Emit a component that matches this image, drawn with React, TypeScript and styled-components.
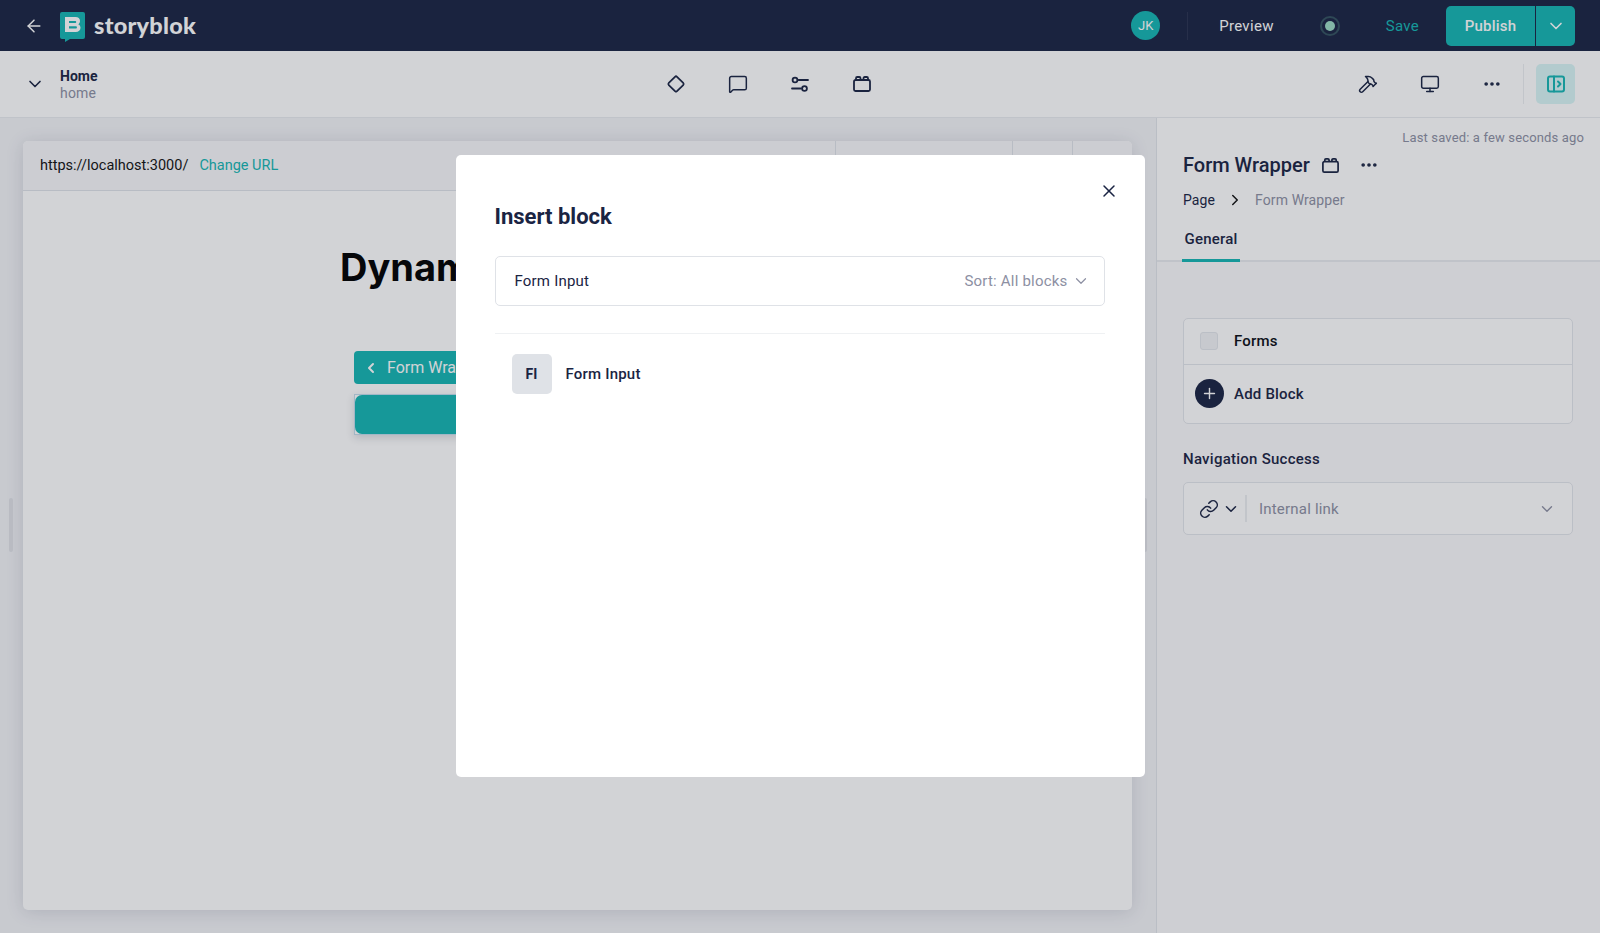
import React from "react";
import styled, { createGlobalStyle } from "styled-components";
import {
  ArrowLeft, ChevronDown, ChevronLeft, ChevronRight, Ellipsis, Hammer, Link, MessageSquare, Monitor, Plus, X,
} from "lucide-react";

const navy = "#1a2443";
const teal = "#14b6b3";
const grey = "#8d90a3";

const Global = createGlobalStyle`
  html, body { margin: 0; padding: 0; height: 100%; overflow: hidden; background: #fff; }
  body { font-family: Roboto, "Liberation Sans", sans-serif; color: ${navy}; }
  * { box-sizing: border-box; }
`;

const Page = styled.div`
  width: 1600px; height: 933px; display: flex; flex-direction: column; overflow: hidden;
`;

const TopBar = styled.header`
  height: 51px; flex: none; background: ${navy}; display: flex; align-items: center; padding: 0 25px 0 24px;
`;
const BackButton = styled.span`
  display: flex; width: 20px; color: #fff; margin-right: 16px;
`;
const LogoMark = styled.svg`
  flex: none; display: block; margin-top: 3px;
`;
const LogoText = styled.span`
  font-family: Lato, sans-serif; font-weight: 900; font-size: 23.5px; line-height: 1; color: #fff; margin-left: 9px; letter-spacing: 0.25px;
`;
const Spacer = styled.div`flex: 1;`;
const Avatar = styled.span`
  width: 29px; height: 29px; border-radius: 50%; background: ${teal}; color: #fff; font-size: 13px;
  display: flex; align-items: center; justify-content: center; margin-right: 27px;
`;
const TopDivider = styled.span`
  width: 1px; height: 28px; background: #2a3350; margin-right: 31px;
`;
const PreviewLink = styled.span`
  color: #fff; font-size: 15px; font-weight: 400; letter-spacing: 0.3px; margin-right: 46px;
`;
const Status = styled.span`
  width: 20px; height: 20px; border-radius: 50%; border: 2px solid #33525f; display: flex; align-items: center; justify-content: center; margin-right: 46px;
  &::after { content: ""; width: 10px; height: 10px; border-radius: 50%; background: #9cdcc4; }
`;
const SaveLink = styled.span`
  color: ${teal}; font-size: 15px; letter-spacing: 0.3px; margin-right: 27px;
`;
const PublishGroup = styled.div`
  display: flex; height: 40px; border-radius: 5px; overflow: hidden; background: ${teal}; color: #fff;
`;
const PublishLabel = styled.span`
  width: 90px; display: flex; align-items: center; justify-content: center; font-size: 15px; font-weight: 500; letter-spacing: 0.2px; border-right: 1px solid ${navy};
`;
const PublishCaret = styled.span`
  width: 39px; display: flex; align-items: center; justify-content: center;
`;

const SubBar = styled.div`
  height: 67px; flex: none; background: #fff; display: grid; grid-template-columns: 1fr auto 1fr; align-items: center;
  border-bottom: 1px solid #e9ebef; padding: 0 25px 0 25px; position: relative; z-index: 2;
`;
const StoryInfo = styled.div`
  display: flex; align-items: center; gap: 15px;
`;
const StoryText = styled.div`
  display: flex; flex-direction: column; font-size: 14px; line-height: 17px; margin-top: 2px;
`;
const StoryName = styled.span`font-weight: 700;`;
const StorySlug = styled.span`color: ${grey}; font-size: 14px; letter-spacing: 0.2px;`;
const CenterTools = styled.div`
  display: flex; gap: 42px; align-items: center; margin-right: 63px;
`;
const ToolIcon = styled.span`
  width: 20px; height: 20px; display: flex; align-items: center; justify-content: center; color: ${navy};
`;
const RightTools = styled.div`
  display: flex; align-items: center; justify-content: flex-end;
`;
const RightIconGroup = styled.div`
  display: flex; gap: 42px; margin-right: 21px;
`;
const ToolDivider = styled.span`
  width: 1px; height: 40px; background: #eceef1; margin-right: 12px;
`;
const PanelToggle = styled.span`
  width: 39px; height: 40px; border-radius: 5px; background: #d9f5f6; color: ${teal}; display: flex; align-items: center; justify-content: center;
`;

const Body = styled.div`
  flex: 1; display: flex; min-height: 0;
`;
const PreviewArea = styled.main`
  width: 1156px; flex: none; background: #f3f4f7; padding: 23px 24px 23px 23px; position: relative; display: flex;
`;
const Handle = styled.span<{ $side: "left" | "right" }>`
  position: absolute; top: 380px; ${(p) => p.$side}: 9px; width: 4px; height: 54px; border-radius: 2px; background: #e0e2e7;
`;
const PreviewCard = styled.section`
  flex: 1; background: #fff; border-radius: 5px; box-shadow: 0 2px 18px rgba(27, 36, 65, 0.14); display: flex; flex-direction: column; overflow: hidden;
`;
const CardHeader = styled.div`
  height: 50px; flex: none; display: flex; background: #f8f8fa; border-bottom: 1px solid #dfe3e9; font-size: 14.5px;
`;
const UrlBox = styled.div`
  width: 812px; display: flex; align-items: center; padding: 0 0 0 17px; gap: 11px;
`;
const UrlText = styled.span`color: #111;`;
const ChangeUrl = styled.span`color: ${teal};`;
const HeaderCell = styled.div<{ $w: number }>`
  width: ${(p) => p.$w}px; border-left: 1px solid #dfe3e9;
`;
const CardBody = styled.div`
  flex: 1; padding: 49px 0 0 317px;
`;
const Heading = styled.h1`
  font-family: Inter, sans-serif; font-size: 38px; font-weight: 700; line-height: 54px; color: #000; margin: 0 0 57px; white-space: nowrap;
`;
const BackBlock = styled.div`
  margin-left: 14px; width: 446px; height: 33px; border-radius: 4px; background: ${teal}; color: #fff; display: flex; align-items: center; gap: 8px; padding-left: 9px; font-size: 16px;
`;
const SelectedFrame = styled.div`
  margin: 10px 0 0 14px; width: 446px; height: 41px; background: #fff; border: 1px solid #c2dcec; box-shadow: 0 3px 8px rgba(27, 36, 65, 0.16);
`;
const SelectedFill = styled.div`
  height: 100%; background: ${teal}; border-radius: 7px;
`;

const SidePanel = styled.aside`
  flex: 1; border-left: 1px solid #e2e5ea; background: #fbfbfc; display: flex; flex-direction: column;
`;
const PanelHead = styled.div`
  background: #fff; border-bottom: 2px solid #e9ebef; height: 144px; padding: 12px 16px 0 26px; flex: none; position: relative;
`;
const SavedNote = styled.div`
  font-size: 13px; line-height: 16px; color: ${grey}; text-align: right; letter-spacing: 0.15px;
`;
const TitleRow = styled.div`
  display: flex; align-items: center; margin-top: 4px; height: 30px; color: ${navy};
`;
const PanelTitle = styled.span`
  font-size: 20px; font-weight: 500; margin-right: 11px;
`;
const TitleDots = styled.span`
  display: flex; margin-left: 19px;
`;
const Crumbs = styled.div`
  display: flex; align-items: center; margin-top: 10px; font-size: 14px; line-height: 20px; letter-spacing: 0.1px;
`;
const CrumbNext = styled.span`
  display: flex; margin: 0 11px 0 11px; color: #111;
`;
const CrumbCurrent = styled.span`color: ${grey};`;
const TabLabel = styled.div`
  position: absolute; left: 25px; bottom: -2px; height: 33px; padding: 0; width: 58px; text-align: center; font-size: 15px; letter-spacing: 0.2px; font-weight: 500; line-height: 20px; border-bottom: 3px solid ${teal};
`;
const PanelBody = styled.div`
  padding: 56px 27px 0 26px;
`;
const BlockBox = styled.div`
  border: 1px solid #e3e6eb; border-radius: 5px; background: #fff;
`;
const BlockRow = styled.div<{ $tall?: boolean }>`
  height: ${(p) => (p.$tall ? 59 : 45)}px; display: flex; align-items: center; font-size: 15px; letter-spacing: 0.2px; font-weight: 500; padding-bottom: 1px;
  & + & { border-top: 1px solid #e3e6eb; }
`;
const CheckSlot = styled.span`
  width: 50px; flex: none; display: flex; justify-content: center;
`;
const Check = styled.span`
  width: 18px; height: 18px; border-radius: 3px; background: #f2f3f5; border: 1px solid #e3e6eb;
`;
const RoundAdd = styled.span`
  width: 29px; height: 29px; border-radius: 50%; background: ${navy}; color: #fff; display: flex; align-items: center; justify-content: center;
`;
const BlackText = styled.span`color: #0a0d14;`;
const FieldLabel = styled.div`
  font-size: 15px; letter-spacing: 0.25px; font-weight: 500; line-height: 20px; margin: 25px 0 13px;
`;
const LinkField = styled.div`
  height: 53px; border: 1px solid #e3e6eb; border-radius: 5px; background: #fff; display: flex; align-items: center; padding: 0 16px 0 15px;
`;
const LinkKind = styled.span`
  display: flex; align-items: center; gap: 3px; height: 27px; padding-right: 5px; border-right: 2px solid #eceef1; margin-right: 12px;
`;
const LinkPlaceholder = styled.span`
  flex: 1; color: ${grey}; font-size: 15px; letter-spacing: 0.2px;
`;

const Overlay = styled.div`
  position: fixed; inset: 0; background: rgba(28, 33, 52, 0.2); z-index: 10; display: flex; align-items: flex-start; justify-content: center; padding-top: 155px;
`;
const Modal = styled.div`
  width: 689px; height: 622px; background: #fff; border-radius: 5px; padding: 48px 40px 0 39px; position: relative;
`;
const CloseIcon = styled.span`
  position: absolute; right: 26px; top: 26px; display: flex; color: ${navy};
`;
const ModalTitle = styled.h2`
  margin: 0; font-size: 22px; font-weight: 700; line-height: 28px; color: ${navy};
`;
const SearchBox = styled.div`
  margin-top: 25px; height: 50px; border: 1px solid #dfe2e7; border-radius: 5px; display: flex; align-items: center; justify-content: space-between; padding: 0 14px 0 19px; font-size: 15px; letter-spacing: 0.2px;
`;
const SortLabel = styled.span`
  display: flex; align-items: center; gap: 4px; color: ${grey};
`;
const ModalDivider = styled.div`
  height: 1px; background: #eff1f3; margin-top: 27px;
`;
const ResultRow = styled.div`
  display: flex; align-items: center; gap: 14px; margin: 20px 0 0 17px; font-size: 15px; letter-spacing: 0.2px; font-weight: 500;
`;
const Tile = styled.span`
  width: 40px; height: 40px; border-radius: 5px; background: #dfe2e7; display: flex; align-items: center; justify-content: center; font-size: 14px; font-weight: 700;
`;

const Diamond = () => (
  <svg width="22" height="22" viewBox="0 0 22 22" fill="none" stroke="currentColor" strokeWidth="1.9" strokeLinejoin="round">
    <rect x="4.6" y="4.6" width="12.8" height="12.8" rx="1.6" transform="rotate(45 11 11)" />
  </svg>
);
const Sliders = () => (
  <svg width="20" height="20" viewBox="0 0 20 20" fill="none" stroke="currentColor" strokeWidth="1.8" strokeLinecap="round">
    <circle cx="5" cy="6" r="2.4" />
    <path d="M8.5 6H18" />
    <circle cx="14.5" cy="14.5" r="2.4" />
    <path d="M2 14.5h9" />
  </svg>
);
const Brick = ({ size = 20 }: { size?: number }) => (
  <svg width={size} height={size} viewBox="0 0 20 20" fill="none" stroke="currentColor" strokeWidth="1.8" strokeLinejoin="round">
    <rect x="2" y="6" width="16" height="11" rx="1.5" />
    <path d="M4 6V4.2C4 3.5 4.5 3 5.2 3h2.1c.7 0 1.2.5 1.2 1.2V6M11.5 6V4.2c0-.7.5-1.2 1.2-1.2h2.1c.7 0 1.2.5 1.2 1.2V6" />
  </svg>
);
const PanelIcon = () => (
  <svg width="20" height="20" viewBox="0 0 20 20" fill="none" stroke="currentColor" strokeWidth="2" strokeLinecap="round" strokeLinejoin="round">
    <rect x="2" y="2.5" width="16" height="15" rx="2" />
    <path d="M8 2.5v15M12 7.5l2.5 2.5-2.5 2.5" />
  </svg>
);
const Logo = () => (
  <LogoMark width="25" height="30" viewBox="0 0 25 30">
    <path d="M2 0h21a2 2 0 0 1 2 2v23a2 2 0 0 1-2 2H10l-5 3v-3H2a2 2 0 0 1-2-2V2a2 2 0 0 1 2-2Z" fill={teal} />
    <path
      fillRule="evenodd"
      fill="#fff"
      d="M5 5h10.5c2.8 0 4.5 1.6 4.5 4 0 1.5-.7 2.6-1.8 3.2 1.5.6 2.3 1.9 2.3 3.6 0 2.7-1.9 4.2-4.8 4.2H5ZM9 9v2h6.2c.6 0 1-.4 1-1s-.4-1-1-1ZM9 14.2v2.4h6.8c.7 0 1.1-.5 1.1-1.2s-.4-1.2-1.1-1.2Z"
    />
  </LogoMark>
);

export default function App() {
  return (
    <>
      <Global />
      <Page>
        <TopBar>
          <BackButton><ArrowLeft size={20} strokeWidth={1.8} /></BackButton>
          <Logo />
          <LogoText>storyblok</LogoText>
          <Spacer />
          <Avatar>JK</Avatar>
          <TopDivider />
          <PreviewLink>Preview</PreviewLink>
          <Status />
          <SaveLink>Save</SaveLink>
          <PublishGroup>
            <PublishLabel>Publish</PublishLabel>
            <PublishCaret><ChevronDown size={20} strokeWidth={2} /></PublishCaret>
          </PublishGroup>
        </TopBar>
        <SubBar>
          <StoryInfo>
            <ChevronDown size={20} strokeWidth={2} />
            <StoryText>
              <StoryName>Home</StoryName>
              <StorySlug>home</StorySlug>
            </StoryText>
          </StoryInfo>
          <CenterTools>
            <ToolIcon><Diamond /></ToolIcon>
            <ToolIcon><MessageSquare size={20} strokeWidth={1.8} /></ToolIcon>
            <ToolIcon><Sliders /></ToolIcon>
            <ToolIcon><Brick /></ToolIcon>
          </CenterTools>
          <RightTools>
            <RightIconGroup>
              <ToolIcon><Hammer size={20} strokeWidth={1.8} /></ToolIcon>
              <ToolIcon><Monitor size={20} strokeWidth={1.8} /></ToolIcon>
              <ToolIcon><Ellipsis size={20} strokeWidth={2.4} /></ToolIcon>
            </RightIconGroup>
            <ToolDivider />
            <PanelToggle><PanelIcon /></PanelToggle>
          </RightTools>
        </SubBar>
        <Body>
          <PreviewArea>
            <Handle $side="left" />
            <Handle $side="right" />
            <PreviewCard>
              <CardHeader>
                <UrlBox>
                  <UrlText>https://localhost:3000/</UrlText>
                  <ChangeUrl>Change URL</ChangeUrl>
                </UrlBox>
                <HeaderCell $w={177} />
                <HeaderCell $w={60} />
                <HeaderCell $w={60} />
              </CardHeader>
              <CardBody>
                <Heading>Dynamic Form</Heading>
                <BackBlock><ChevronLeft size={16} strokeWidth={3} />Form Wrapper</BackBlock>
                <SelectedFrame><SelectedFill /></SelectedFrame>
              </CardBody>
            </PreviewCard>
          </PreviewArea>
          <SidePanel>
            <PanelHead>
              <SavedNote>Last saved: a few seconds ago</SavedNote>
              <TitleRow>
                <PanelTitle>Form Wrapper</PanelTitle>
                <Brick size={19} />
                <TitleDots><Ellipsis size={20} strokeWidth={2.4} /></TitleDots>
              </TitleRow>
              <Crumbs>
                Page
                <CrumbNext><ChevronRight size={18} strokeWidth={2} /></CrumbNext>
                <CrumbCurrent>Form Wrapper</CrumbCurrent>
              </Crumbs>
              <TabLabel>General</TabLabel>
            </PanelHead>
            <PanelBody>
              <BlockBox>
                <BlockRow>
                  <CheckSlot><Check /></CheckSlot>
                  <BlackText>Forms</BlackText>
                </BlockRow>
                <BlockRow $tall>
                  <CheckSlot><RoundAdd><Plus size={17} strokeWidth={2} /></RoundAdd></CheckSlot>
                  Add Block
                </BlockRow>
              </BlockBox>
              <FieldLabel>Navigation Success</FieldLabel>
              <LinkField>
                <LinkKind>
                  <Link size={20} strokeWidth={1.8} />
                  <ChevronDown size={18} strokeWidth={2} />
                </LinkKind>
                <LinkPlaceholder>Internal link</LinkPlaceholder>
                <ChevronDown size={18} color={grey} strokeWidth={1.8} />
              </LinkField>
            </PanelBody>
          </SidePanel>
        </Body>
      </Page>
      <Overlay>
        <Modal>
          <CloseIcon><X size={20} strokeWidth={1.8} /></CloseIcon>
          <ModalTitle>Insert block</ModalTitle>
          <SearchBox>
            <span>Form Input</span>
            <SortLabel>Sort: All blocks<ChevronDown size={18} strokeWidth={1.6} /></SortLabel>
          </SearchBox>
          <ModalDivider />
          <ResultRow>
            <Tile>FI</Tile>
            Form Input
          </ResultRow>
        </Modal>
      </Overlay>
    </>
  );
}
